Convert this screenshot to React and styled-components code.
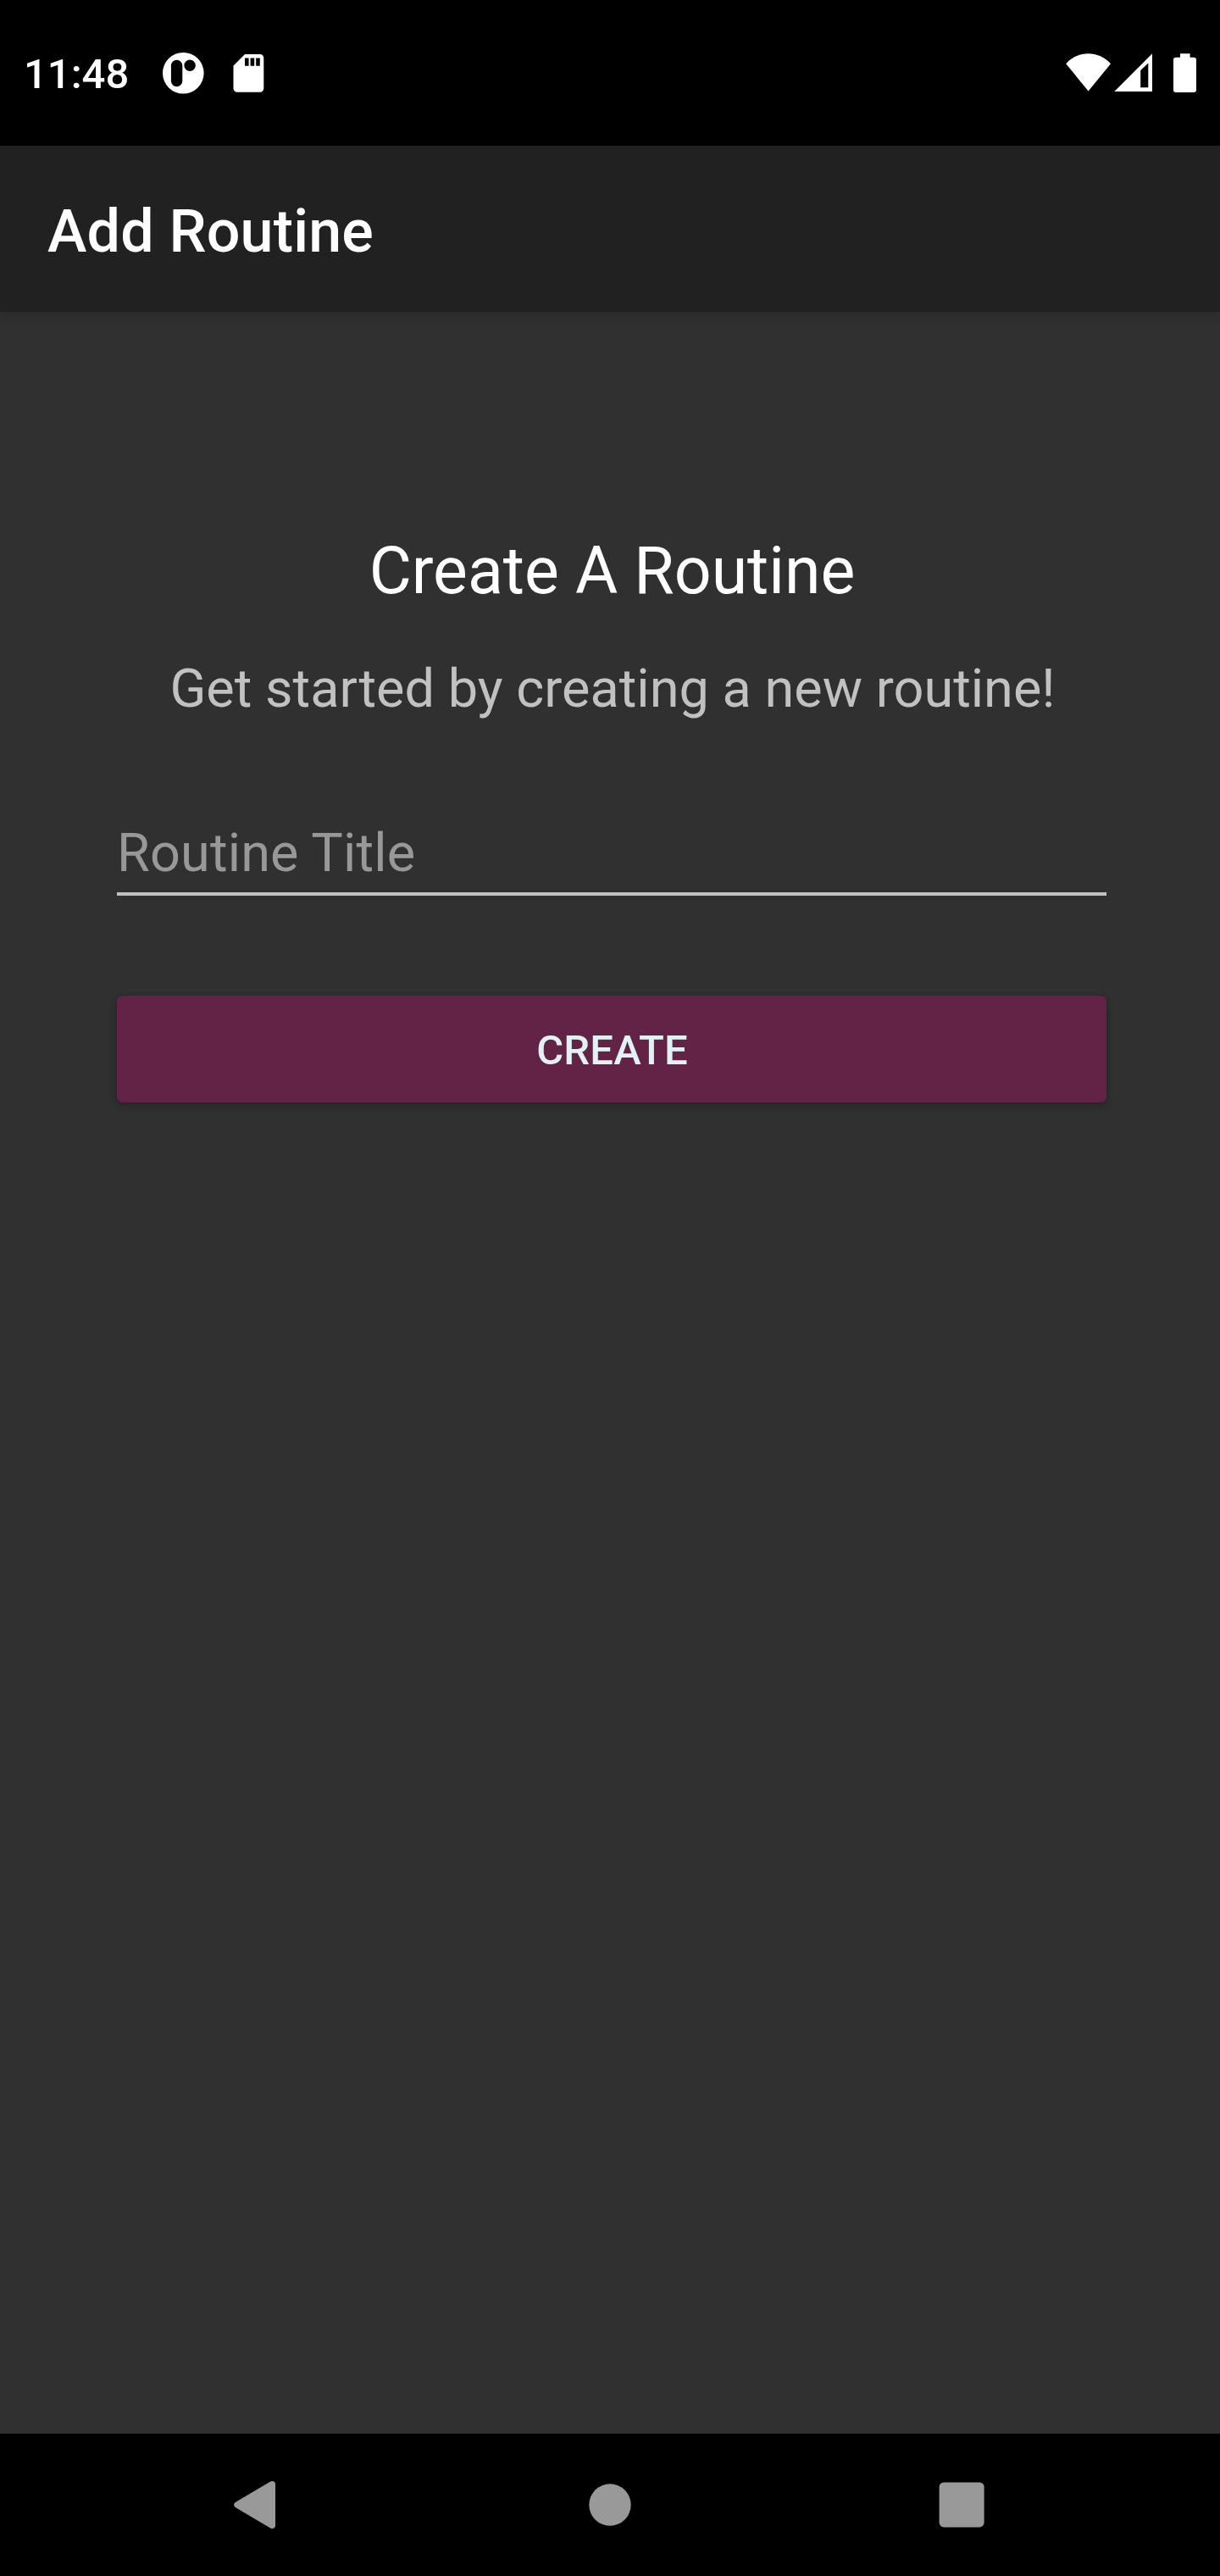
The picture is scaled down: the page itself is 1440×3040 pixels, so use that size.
import React from "react";
import styled, { createGlobalStyle } from "styled-components";

const GlobalStyle = createGlobalStyle`
  * { box-sizing: border-box; }
  body { margin: 0; background: #303030; }
`;

const Screen = styled.div`
  display: flex;
  flex-direction: column;
  width: 1440px;
  height: 3040px;
  background: #303030;
  font-family: Roboto, "Liberation Sans", sans-serif;
`;

const StatusBar = styled.header`
  display: flex;
  justify-content: space-between;
  flex: none;
  height: 172px;
  padding: 60px 24px 0 28px;
  background: #000;
`;

const StatusGroup = styled.div`
  display: flex;
  align-items: flex-start;
`;

const Clock = styled.span`
  width: 160px;
  font-size: 49px;
  font-weight: 500;
  line-height: 56px;
  color: #fff;
`;

const StatusIcon = styled.svg`
  display: block;
  flex: none;
  width: ${(p) => p.$w}px;
  height: 52px;
  margin-left: ${(p) => p.$gap || 0}px;
  fill: #fff;
`;

const AppBar = styled.div`
  display: flex;
  align-items: center;
  flex: none;
  height: 196px;
  padding: 6px 56px 0;
  background: #212121;
  box-shadow: 0 2px 12px rgba(0, 0, 0, 0.2);
`;

const AppTitle = styled.h1`
  margin: 0;
  font-size: 70px;
  font-weight: 500;
  line-height: 82px;
  letter-spacing: 0.18px;
  color: #fff;
`;

const Content = styled.main`
  display: flex;
  flex-direction: column;
  flex: 1;
  width: 1168px;
  margin-left: 138px;
  padding-top: 261px;
`;

const Heading = styled.h2`
  margin: 0 0 57px;
  padding-left: 1px;
  font-size: 77px;
  font-weight: 400;
  line-height: 90px;
  text-align: center;
  white-space: nowrap;
  color: #fff;
`;

const Subtitle = styled.p`
  margin: 0 0 121px;
  padding-left: 2px;
  font-size: 63px;
  font-weight: 400;
  line-height: 73px;
  letter-spacing: 0.02px;
  text-align: center;
  white-space: nowrap;
  color: #c1c1c1;
`;

const TitleInput = styled.input`
  width: 100%;
  height: 87px;
  margin: 0 0 118px;
  padding: 0 0 10px;
  border: 0;
  border-bottom: 4px solid #c1c1c1;
  border-radius: 0;
  outline: none;
  background: transparent;
  font: 400 63px/73px Roboto, "Liberation Sans", sans-serif;
  letter-spacing: 0.15px;
  color: #fff;
  &::placeholder {
    color: #989898;
    opacity: 1;
  }
`;

const CreateButton = styled.button`
  height: 126px;
  padding: 4px 0 0 1px;
  border: 0;
  border-radius: 7px;
  background: #622347;
  box-shadow: 0 4px 8px rgba(0, 0, 0, 0.2), 0 0 5px rgba(0, 0, 0, 0.12);
  font: 500 49px/58px Roboto, "Liberation Sans", sans-serif;
  letter-spacing: 0.2px;
  color: #e0f2f1;
`;

const NavBar = styled.nav`
  display: flex;
  justify-content: center;
  align-items: center;
  gap: 355px;
  flex: none;
  height: 168px;
  background: #000;
`;

const NavIcon = styled.svg`
  display: block;
  width: 60px;
  height: 60px;
  fill: #999;
`;

export default function App() {
  return (
    <Screen>
      <GlobalStyle />
      <StatusBar>
        <StatusGroup>
          <Clock>11:48</Clock>
          <StatusIcon $w={56} viewBox="188 60 56 52">
            <path
              fillRule="evenodd"
              d="M216.3 62a24.3 24.3 0 1 1 0 48.6a24.3 24.3 0 1 1 0-48.6Z
                 M208.6 70.8a6.7 6.7 0 0 0-6.7 6.7v18a6.7 6.7 0 0 0 13.4 0v-18a6.7 6.7 0 0 0-6.7-6.7Z
                 M224.1 70.6a6.7 6.7 0 1 0 0 13.4a6.7 6.7 0 1 0 0-13.4Z"
            />
          </StatusIcon>
          <StatusIcon $w={44} $gap={27} viewBox="271 60 44 52">
            <path
              fillRule="evenodd"
              d="M289 64h17.8a4.5 4.5 0 0 1 4.5 4.5v35.7a4.5 4.5 0 0 1-4.5 4.5H280a4.5 4.5 0 0 1-4.5-4.5V77.4Z
                 M289 68.5h4.6v9.3H289ZM295.6 68.5h4.6v9.3h-4.6ZM302.2 68.5h4.6v9.3h-4.6Z"
            />
          </StatusIcon>
        </StatusGroup>
        <StatusGroup>
          <StatusIcon $w={56} viewBox="1256 60 56 52">
            <path d="M1258.2 75.2C1272 59.3 1297 59.3 1311 75.2L1284.6 107.5Z" />
          </StatusIcon>
          <StatusIcon $w={50} viewBox="1312 60 50 52">
            <path
              fillRule="evenodd"
              d="M1315.3 107.9L1360 63.3V107.9ZM1346.2 83V103.2H1355.3V74.5Z"
            />
          </StatusIcon>
          <StatusIcon $w={34} $gap={20} viewBox="1382 60 34 52">
            <path d="M1393 63.2h11.6V67.8h4.4a3 3 0 0 1 3 3v35.2a3 3 0 0 1-3 3h-21a3 3 0 0 1-3-3V70.8a3 3 0 0 1 3-3h5Z" />
          </StatusIcon>
        </StatusGroup>
      </StatusBar>
      <AppBar>
        <AppTitle>Add Routine</AppTitle>
      </AppBar>
      <Content>
        <Heading>Create A Routine</Heading>
        <Subtitle>Get started by creating a new routine!</Subtitle>
        <TitleInput placeholder="Routine Title" />
        <CreateButton>CREATE</CreateButton>
      </Content>
      <NavBar>
        <NavIcon viewBox="275 2926 60 60">
          <path d="M277.8 2953L319.2 2928.6Q322 2927 324 2929Q325 2930 325 2932V2980Q325 2982 324 2983Q322 2985 319.2 2983.4L277.8 2959Q274.2 2956 277.8 2953Z" />
        </NavIcon>
        <NavIcon viewBox="690 2926 60 60">
          <circle cx="720" cy="2956" r="24.7" />
        </NavIcon>
        <NavIcon viewBox="1105 2926 60 60">
          <rect x="1108.6" y="2929.4" width="53" height="53" rx="5.5" />
        </NavIcon>
      </NavBar>
    </Screen>
  );
}
